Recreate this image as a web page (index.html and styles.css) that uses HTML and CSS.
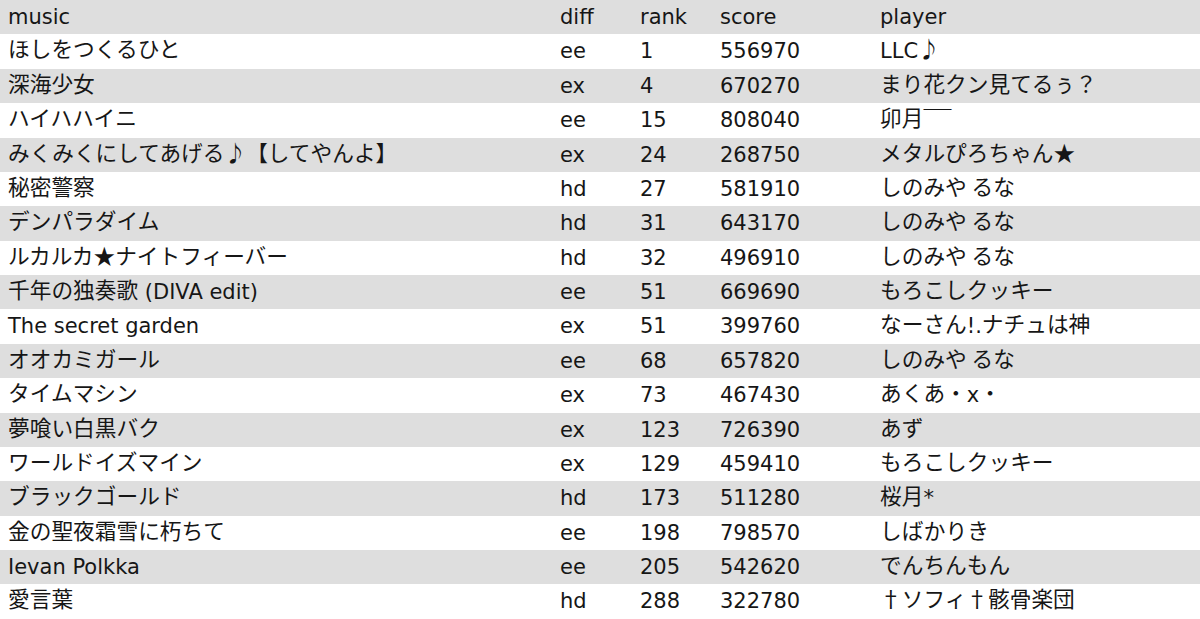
FILE: index.html
```html
<!DOCTYPE html>
<html lang="ja">
<head>
<meta charset="utf-8">
<title>ranking</title>
<link rel="stylesheet" href="styles.css">
</head>
<body>
<div class="table">
  <div class="row head"><div class="c">music</div><div class="c">diff</div><div class="c">rank</div><div class="c">score</div><div class="c">player</div></div>
  <div class="row"><div class="c"><span class="ja">ほしをつくるひと</span></div><div class="c">ee</div><div class="c">1</div><div class="c">556970</div><div class="c">LLC<span class="ja">♪</span></div></div>
  <div class="row"><div class="c"><span class="ja">深海少女</span></div><div class="c">ex</div><div class="c">4</div><div class="c">670270</div><div class="c"><span class="ja">まり花クン見てるぅ？</span></div></div>
  <div class="row"><div class="c"><span class="ja">ハイハハイニ</span></div><div class="c">ee</div><div class="c">15</div><div class="c">808040</div><div class="c"><span class="ja">卯月</span><span class="ovl">￣￣</span></div></div>
  <div class="row"><div class="c"><span class="ja">みくみくにしてあげる♪【してやんよ】</span></div><div class="c">ex</div><div class="c">24</div><div class="c">268750</div><div class="c"><span class="ja">メタルぴろちゃん★</span></div></div>
  <div class="row"><div class="c"><span class="ja">秘密警察</span></div><div class="c">hd</div><div class="c">27</div><div class="c">581910</div><div class="c"><span class="ja">しのみや るな</span></div></div>
  <div class="row"><div class="c"><span class="ja">デンパラダイム</span></div><div class="c">hd</div><div class="c">31</div><div class="c">643170</div><div class="c"><span class="ja">しのみや るな</span></div></div>
  <div class="row"><div class="c"><span class="ja">ルカルカ★ナイトフィーバー</span></div><div class="c">hd</div><div class="c">32</div><div class="c">496910</div><div class="c"><span class="ja">しのみや るな</span></div></div>
  <div class="row"><div class="c"><span class="ja">千年の独奏歌</span> (DIVA edit)</div><div class="c">ee</div><div class="c">51</div><div class="c">669690</div><div class="c"><span class="ja">もろこしクッキー</span></div></div>
  <div class="row"><div class="c">The secret garden</div><div class="c">ex</div><div class="c">51</div><div class="c">399760</div><div class="c"><span class="ja">なーさん</span>!.<span class="ja">ナチュは神</span></div></div>
  <div class="row"><div class="c"><span class="ja">オオカミガール</span></div><div class="c">ee</div><div class="c">68</div><div class="c">657820</div><div class="c"><span class="ja">しのみや るな</span></div></div>
  <div class="row"><div class="c"><span class="ja">タイムマシン</span></div><div class="c">ex</div><div class="c">73</div><div class="c">467430</div><div class="c"><span class="ja">あくあ・</span>x<span class="ja">・</span></div></div>
  <div class="row"><div class="c"><span class="ja">夢喰い白黒バク</span></div><div class="c">ex</div><div class="c">123</div><div class="c">726390</div><div class="c"><span class="ja">あず</span></div></div>
  <div class="row"><div class="c"><span class="ja">ワールドイズマイン</span></div><div class="c">ex</div><div class="c">129</div><div class="c">459410</div><div class="c"><span class="ja">もろこしクッキー</span></div></div>
  <div class="row"><div class="c"><span class="ja">ブラックゴールド</span></div><div class="c">hd</div><div class="c">173</div><div class="c">511280</div><div class="c"><span class="ja">桜月</span>*</div></div>
  <div class="row"><div class="c"><span class="ja">金の聖夜霜雪に朽ちて</span></div><div class="c">ee</div><div class="c">198</div><div class="c">798570</div><div class="c"><span class="ja">しばかりき</span></div></div>
  <div class="row"><div class="c">Ievan Polkka</div><div class="c">ee</div><div class="c">205</div><div class="c">542620</div><div class="c"><span class="ja">でんちんもん</span></div></div>
  <div class="row"><div class="c"><span class="ja">愛言葉</span></div><div class="c">hd</div><div class="c">288</div><div class="c">322780</div><div class="c"><span class="ja">†ソフィ†骸骨楽団</span></div></div>
</div>
</body>
</html>
```

FILE: styles.css
```css
html, body {
  margin: 0;
  padding: 0;
  background: #ffffff;
}
body {
  font-family: "DejaVu Sans", "Noto Sans CJK JP", sans-serif;
  font-size: 21px;
  color: #161616;
  width: 1200px;
  height: 619px;
  overflow: hidden;
}
.table {
  display: flex;
  flex-direction: column;
}
.row {
  display: grid;
  grid-template-columns: 552px 80px 80px 160px 1fr;
  height: 34.389px;
  line-height: 34.389px;
}
.row:nth-child(odd) {
  background: #dedede;
}
.c {
  padding-left: 8px;
  white-space: nowrap;
}
.ja {
  font-family: "Noto Sans CJK JP", "DejaVu Sans", sans-serif;
  font-size: 21.7px;
  line-height: 1;
  vertical-align: 1px;
}
.ovl {
  letter-spacing: -14px;
}
```
